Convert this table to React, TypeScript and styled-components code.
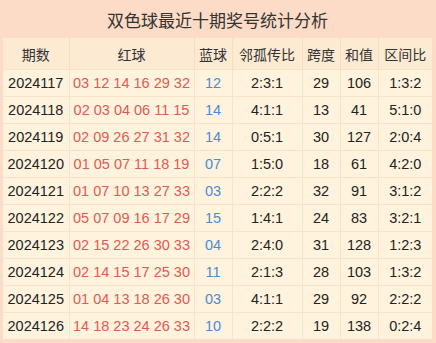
import React from 'react'
import styled, { createGlobalStyle } from 'styled-components'

const GlobalStyle = createGlobalStyle`
	body {
		margin: 0;
		background: #ffffff;
		font-family: 'Liberation Sans', 'Noto Sans CJK SC', sans-serif;
	}
`

const draws = [
	{ issue: '2024117', red: '03 12 14 16 29 32', blue: '12', odd: '2:3:1', span: 29, sum: 106, zone: '1:3:2' },
	{ issue: '2024118', red: '02 03 04 06 11 15', blue: '14', odd: '4:1:1', span: 13, sum: 41, zone: '5:1:0' },
	{ issue: '2024119', red: '02 09 26 27 31 32', blue: '14', odd: '0:5:1', span: 30, sum: 127, zone: '2:0:4' },
	{ issue: '2024120', red: '01 05 07 11 18 19', blue: '07', odd: '1:5:0', span: 18, sum: 61, zone: '4:2:0' },
	{ issue: '2024121', red: '01 07 10 13 27 33', blue: '03', odd: '2:2:2', span: 32, sum: 91, zone: '3:1:2' },
	{ issue: '2024122', red: '05 07 09 16 17 29', blue: '15', odd: '1:4:1', span: 24, sum: 83, zone: '3:2:1' },
	{ issue: '2024123', red: '02 15 22 26 30 33', blue: '04', odd: '2:4:0', span: 31, sum: 128, zone: '1:2:3' },
	{ issue: '2024124', red: '02 14 15 17 25 30', blue: '11', odd: '2:1:3', span: 28, sum: 103, zone: '1:3:2' },
	{ issue: '2024125', red: '01 04 13 18 26 30', blue: '03', odd: '4:1:1', span: 29, sum: 92, zone: '2:2:2' },
	{ issue: '2024126', red: '14 18 23 24 26 33', blue: '10', odd: '2:2:2', span: 19, sum: 138, zone: '0:2:4' },
]

const widths = [66, 125, 38, 70, 38, 38, 54]
const headers = ['期数', '红球', '蓝球', '邻孤传比', '跨度', '和值', '区间比']

const App = () => {
	return (
		<>
			<GlobalStyle />
			<Panel>
				<Title>双色球最近十期奖号统计分析</Title>
				<Table>
					<colgroup>
						{widths.map((w, i) => (
							<col key={i} style={{ width: w }} />
						))}
					</colgroup>
					<thead>
						<tr>
							{headers.map((h) => (
								<HeadCell key={h}>{h}</HeadCell>
							))}
						</tr>
					</thead>
					<tbody>
						{draws.map((d) => (
							<tr key={d.issue}>
								<Cell>{d.issue}</Cell>
								<Cell $tone="red">{d.red}</Cell>
								<Cell $tone="blue">{d.blue}</Cell>
								<Cell>{d.odd}</Cell>
								<Cell>{d.span}</Cell>
								<Cell>{d.sum}</Cell>
								<Cell>{d.zone}</Cell>
							</tr>
						))}
					</tbody>
				</Table>
			</Panel>
		</>
	)
}

const Panel = styled.div`
	width: 436px;
	height: 343px;
	box-sizing: border-box;
	background: #fcdcc6;
	padding: 0 4px 5px 3px;
	overflow: hidden;
`

const Title = styled.div`
	height: 38px;
	display: flex;
	align-items: center;
	justify-content: center;
	font-family: 'Noto Sans CJK SC', sans-serif;
	font-size: 17px;
	color: #333333;
`

const Table = styled.table`
	width: 429px;
	table-layout: fixed;
	border-collapse: collapse;
	background: #fff3dd;
`

const HeadCell = styled.th`
	height: 31px;
	padding: 0;
	background: #fdead2;
	border-left: 1px solid #f8dcc2;
	font-family: 'Noto Sans CJK SC', sans-serif;
	font-size: 14px;
	font-weight: 400;
	color: #333333;
	text-align: center;
	line-height: 1;

	&:first-child {
		border-left: none;
	}
`

const Cell = styled.td<{ $tone?: 'red' | 'blue' }>`
	height: 26px;
	padding: 0;
	border-left: 1px solid #f8e2c8;
	border-top: 1px solid #f8e2c8;
	font-size: 14.5px;
	line-height: 1;
	text-align: center;
	white-space: nowrap;
	color: ${(p) => (p.$tone === 'red' ? '#e05a55' : p.$tone === 'blue' ? '#4a8ad6' : '#222222')};

	&:first-child {
		border-left: none;
	}
`

export default App
